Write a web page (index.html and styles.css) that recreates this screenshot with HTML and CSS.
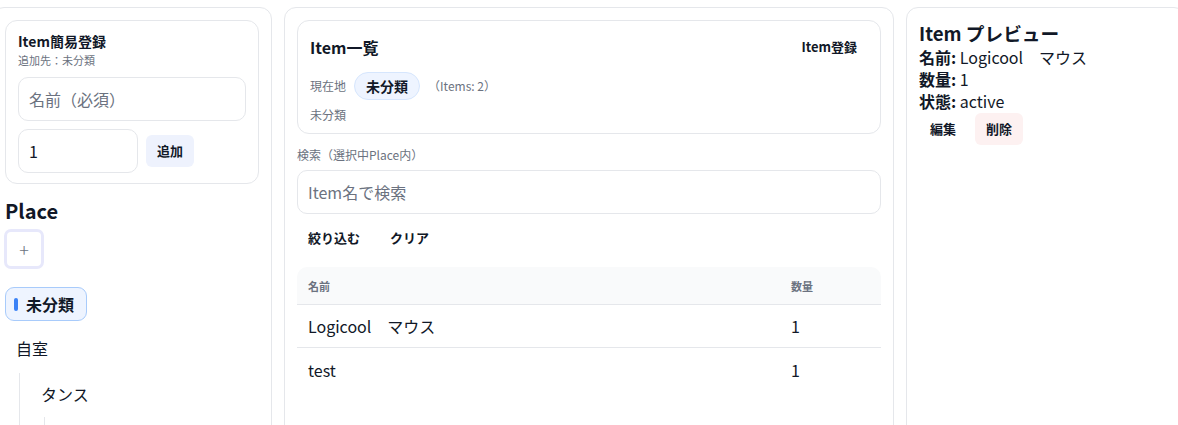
FILE: index.html
```html
<!DOCTYPE html>
<html lang="ja">
<head>
<meta charset="utf-8">
<link rel="stylesheet" href="styles.css">
</head>
<body>
<div class="layout">
  <aside class="panel left">
    <div class="card quick">
      <div class="quick-title">Item簡易登録</div>
      <div class="quick-sub">追加先：未分類</div>
      <input class="field" type="text" placeholder="名前（必須）">
      <div class="quick-row">
        <input class="field qty" type="text" value="1">
        <button class="btn soft-blue">追加</button>
      </div>
    </div>
    <h2 class="place-title">Place</h2>
    <button class="add-place">+</button>
    <div class="tree">
      <div class="node selected"><span class="bar"></span>未分類</div>
      <div class="node">自室</div>
      <div class="children">
        <div class="node">タンス</div>
        <div class="children deep"></div>
      </div>
    </div>
  </aside>

  <main class="panel middle">
    <div class="card list-head">
      <div class="head-row">
        <h1 class="list-title">Item一覧</h1>
        <button class="btn plain">Item登録</button>
      </div>
      <div class="loc-row">
        <span class="muted">現在地</span>
        <span class="pill">未分類</span>
        <span class="muted">（Items: 2）</span>
      </div>
      <div class="muted path">未分類</div>
    </div>
    <div class="search-label">検索（選択中Place内）</div>
    <input class="field wide" type="text" placeholder="Item名で検索">
    <div class="btn-row">
      <button class="btn plain">絞り込む</button>
      <button class="btn plain">クリア</button>
    </div>
    <table class="items">
      <thead>
        <tr><th>名前</th><th class="qty-col">数量</th></tr>
      </thead>
      <tbody>
        <tr><td>Logicool　マウス</td><td>1</td></tr>
        <tr><td>test</td><td>1</td></tr>
      </tbody>
    </table>
  </main>

  <aside class="panel right">
    <h2 class="preview-title">Item プレビュー</h2>
    <div class="prop"><b>名前:</b> Logicool　マウス</div>
    <div class="prop"><b>数量:</b> 1</div>
    <div class="prop"><b>状態:</b> active</div>
    <div class="btn-row tight">
      <button class="btn plain">編集</button>
      <button class="btn soft-red">削除</button>
    </div>
  </aside>
</div>
</body>
</html>
```

FILE: styles.css
```css
* { box-sizing: border-box; }
html, body { margin: 0; padding: 0; background: #fff; overflow: hidden; }
body {
  font-family: "Noto Sans CJK JP", "Noto Sans", sans-serif;
  color: #111827;
  width: 1178px;
  height: 425px;
}
.layout {
  display: grid;
  grid-template-columns: 280px 610px 280px;
  gap: 12px;
  margin-left: -8px;
  padding-top: 7px;
  align-items: start;
}
.panel {
  border: 1px solid #e5e7eb;
  border-radius: 12px;
  padding: 12px;
  height: 440px;
  background: #fff;
}
.card {
  border: 1px solid #e5e7eb;
  border-radius: 12px;
  padding: 12px;
}
button { font-family: inherit; }
.btn {
  height: 32px;
  padding: 0 11px;
  border: none;
  border-radius: 6px;
  background: transparent;
  font-size: 13px;
  font-weight: 700;
  color: #111827;
  line-height: 32px;
}
.btn.soft-blue { background: #eef2fd; }
.btn.soft-red { background: #fdf1f1; }
.field {
  display: block;
  width: 100%;
  height: 44px;
  border: 1px solid #e5e7eb;
  border-radius: 10px;
  padding: 0 10px;
  font-family: inherit;
  font-size: 16px;
  color: #111827;
  outline: none;
}
.field::placeholder { color: #6b7280; }

/* left */
.quick { padding-bottom: 10px; }
.quick-title { font-size: 14px; font-weight: 700; line-height: 16px; }
.quick-sub { font-size: 11px; color: #6b7280; line-height: 16px; margin-top: 3px; }
.quick .field { margin-top: 9px; }
.quick-row { display: flex; align-items: center; gap: 8px; margin-top: 8px; }
.quick-row .field { margin-top: 0; }
.field.qty { width: 120px; }
.place-title { font-size: 20px; font-weight: 700; line-height: 24px; margin: 15px 0 0; }
.add-place {
  display: block;
  width: 40px;
  height: 40px;
  margin: 6px 0 0 -1px;
  border: 3px solid #e7e8fb;
  border-radius: 7px;
  background: #fff;
  color: #6b7280;
  font-size: 18px;
  font-weight: 300;
  line-height: 30px;
  padding: 0;
}
.tree { margin-top: 18px; display: flex; flex-direction: column; gap: 10px; }
.node {
  display: flex;
  align-items: center;
  gap: 8px;
  height: 34px;
  padding: 0 10px;
  border: 1px solid transparent;
  border-radius: 9px;
  font-size: 16px;
  align-self: flex-start;
}
.node.selected {
  background: #eef4ff;
  border-color: #a8cbfb;
  font-weight: 700;
  padding: 0 12px 0 8px;
}
.bar { width: 4px; height: 13px; border-radius: 2px; background: #3b82f6; }
.children {
  margin-left: 14px;
  border-left: 1px solid #e5e7eb;
  padding: 4px 0 0 10px;
  margin-top: -2px;
  display: flex;
  flex-direction: column;
  gap: 8px;
}
.children.deep { margin-left: 14px; height: 20px; padding: 0; }

/* middle */
.list-head { padding-bottom: 9px; }
.head-row { display: flex; justify-content: space-between; align-items: center; height: 28px; }
.list-title { font-size: 16px; font-weight: 700; margin: 0; line-height: 28px; }
.loc-row { display: flex; align-items: center; gap: 8px; margin-top: 11px; }
.muted { font-size: 12px; color: #6b7280; line-height: 18px; }
.pill {
  height: 28px;
  padding: 0 11px;
  border-radius: 14px;
  background: #eef4ff;
  border: 1px solid #d6e6fd;
  font-size: 14px;
  font-weight: 700;
  line-height: 26px;
}
.path { margin-top: 6px; }
.search-label { font-size: 12px; color: #6b7280; line-height: 18px; margin-top: 12px; }
.field.wide { margin-top: 6px; }
.btn-row { display: flex; gap: 8px; margin-top: 8px; }
.items {
  width: 100%;
  margin-top: 13px;
  border-collapse: separate;
  border-spacing: 0;
}
.items th {
  background: #f9fafb;
  height: 38px;
  text-align: left;
  font-size: 11px;
  font-weight: 700;
  color: #6b7280;
  padding: 0 11px;
  border-bottom: 1px solid #e5e7eb;
}
.items th:first-child { border-top-left-radius: 10px; }
.items th:last-child { border-top-right-radius: 10px; }
.items th.qty-col { width: 101px; }
.items td {
  height: 43px;
  padding: 0 11px;
  font-size: 16px;
  border-bottom: 1px solid #e5e7eb;
}
.items tr:last-child td { border-bottom: none; }

/* right */
.preview-title { font-size: 18.7px; font-weight: 700; margin: 0; line-height: 26px; }
.prop { font-size: 16px; line-height: 22px; }
.prop b { font-weight: 700; }
.btn-row.tight { margin-top: 1px; }
```
